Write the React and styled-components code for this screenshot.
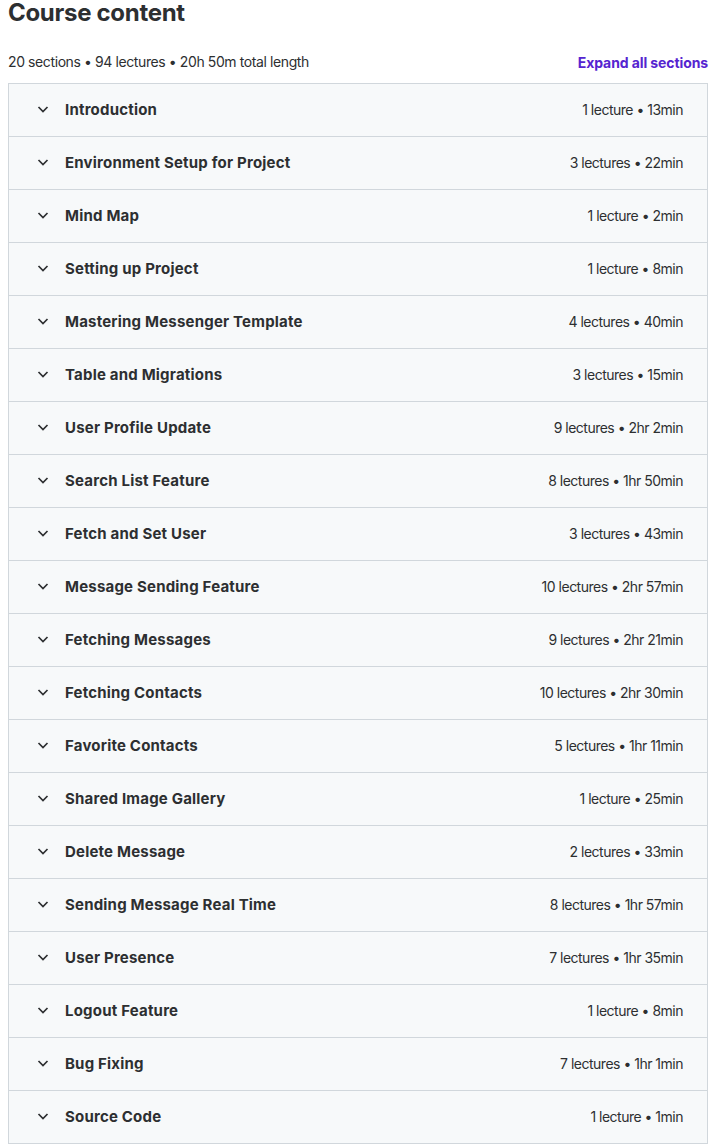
import React from "react";
import styled, { createGlobalStyle } from "styled-components";

const GlobalStyle = createGlobalStyle`
  body {
    margin: 0;
    background: #fff;
    font-family: "Inter", "Liberation Sans", sans-serif;
    color: #2d2f31;
  }
`;

const sections = [
  ["Introduction", "1 lecture • 13min"],
  ["Environment Setup for Project", "3 lectures • 22min"],
  ["Mind Map", "1 lecture • 2min"],
  ["Setting up Project", "1 lecture • 8min"],
  ["Mastering Messenger Template", "4 lectures • 40min"],
  ["Table and Migrations", "3 lectures • 15min"],
  ["User Profile Update", "9 lectures • 2hr 2min"],
  ["Search List Feature", "8 lectures • 1hr 50min"],
  ["Fetch and Set User", "3 lectures • 43min"],
  ["Message Sending Feature", "10 lectures • 2hr 57min"],
  ["Fetching Messages", "9 lectures • 2hr 21min"],
  ["Fetching Contacts", "10 lectures • 2hr 30min"],
  ["Favorite Contacts", "5 lectures • 1hr 11min"],
  ["Shared Image Gallery", "1 lecture • 25min"],
  ["Delete Message", "2 lectures • 33min"],
  ["Sending Message Real Time", "8 lectures • 1hr 57min"],
  ["User Presence", "7 lectures • 1hr 35min"],
  ["Logout Feature", "1 lecture • 8min"],
  ["Bug Fixing", "7 lectures • 1hr 1min"],
  ["Source Code", "1 lecture • 1min"],
];

const Page = styled.div`
  width: 700px;
  padding: 0 7px 4px 8px;
`;

const Title = styled.h2`
  margin: 0;
  font-size: 24px;
  line-height: 26px;
  font-weight: 700;
  letter-spacing: -0.3px;
`;

const MetaBar = styled.div`
  display: flex;
  align-items: flex-end;
  justify-content: space-between;
  margin-top: 26px;
  height: 22px;
  padding-bottom: 9px;
`;

const Meta = styled.span`
  font-size: 14px;
  line-height: 20px;
  letter-spacing: -0.4px;
  padding-bottom: 2px;
`;

const ExpandLink = styled.button`
  border: 0;
  background: none;
  padding: 0 0 1px;
  font-family: inherit;
  font-size: 14px;
  line-height: 20px;
  font-weight: 700;
  letter-spacing: -0.1px;
  color: #5624d0;
  cursor: pointer;
`;

const Accordion = styled.div`
  border: 1px solid #d1d7dc;
  border-bottom: 0;
`;

const Row = styled.div`
  display: flex;
  align-items: center;
  height: 53px;
  padding: 0 24px 2px 28px;
  box-sizing: border-box;
  background: #f7f9fa;
  border-bottom: 1px solid #d1d7dc;
`;

const Chevron = styled.svg`
  width: 12px;
  height: 12px;
  flex: none;
  margin-right: 16px;
`;

const SectionTitle = styled.span`
  flex: 1;
  font-size: 15px;
  font-weight: 700;
  letter-spacing: 0.2px;
`;

const SectionInfo = styled.span`
  font-size: 14px;
  letter-spacing: -0.5px;
`;

function ChevronIcon() {
  return (
    <Chevron viewBox="0 0 12 12">
      <path
        d="M1.5 4l4.5 4.5L10.5 4"
        fill="none"
        stroke="#2d2f31"
        strokeWidth="1.7"
      />
    </Chevron>
  );
}

export default function App() {
  return (
    <Page>
      <GlobalStyle />
      <Title>Course content</Title>
      <MetaBar>
        <Meta>20 sections • 94 lectures • 20h 50m total length</Meta>
        <ExpandLink>Expand all sections</ExpandLink>
      </MetaBar>
      <Accordion>
        {sections.map(([name, info]) => (
          <Row key={name}>
            <ChevronIcon />
            <SectionTitle>{name}</SectionTitle>
            <SectionInfo>{info}</SectionInfo>
          </Row>
        ))}
      </Accordion>
    </Page>
  );
}
